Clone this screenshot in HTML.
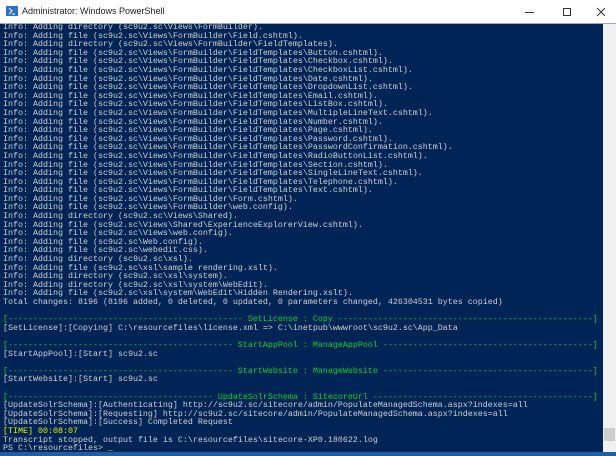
<!DOCTYPE html><html><head><style>
body{margin:0;width:616px;height:456px;overflow:hidden;background:#012456;font-family:"Liberation Sans",sans-serif;position:relative}
#t{position:absolute;left:0;top:0;width:616px;height:23px;background:#fff;border-bottom:1px solid #9ab}
#t span{position:absolute;left:22px;top:6px;font-size:9px;color:#222}
#c{position:absolute;left:3px;top:23px;font-family:"Liberation Mono",monospace;font-size:8.33px;line-height:8.6px;color:#d0d0d0;white-space:pre;margin:0}
.g{color:#13d22b}.y{color:#f0f000}
#sb{position:absolute;left:603px;top:24px;width:13px;height:428px;background:#f0f0f0}
#th{position:absolute;left:604px;top:428px;width:11px;height:13px;background:#cdcdcd}
</style></head><body>
<div id="t"><svg style="position:absolute;left:6px;top:6px" width="12" height="10"><rect width="12" height="10" fill="#2a6fc9"/><path d="M3 2l3 3-3 3M6 8h3" stroke="#fff" fill="none"/></svg><span>Administrator: Windows PowerShell</span>
<svg style="position:absolute;left:525px;top:7px" width="80" height="10"><path d="M0 5.5h9" stroke="#333"/><rect x="38.5" y="1.5" width="7" height="7" fill="none" stroke="#333"/><path d="M72 1l8 8M80 1l-8 8" stroke="#333"/></svg></div>
<pre id="c">Info: Adding directory (sc9u2.sc\Views\FormBuilder).
Info: Adding file (sc9u2.sc\Views\FormBuilder\Field.cshtml).
Info: Adding directory (sc9u2.sc\Views\FormBuilder\FieldTemplates).
Info: Adding file (sc9u2.sc\Views\FormBuilder\FieldTemplates\Button.cshtml).
Info: Adding file (sc9u2.sc\Views\FormBuilder\FieldTemplates\Checkbox.cshtml).
Info: Adding file (sc9u2.sc\Views\FormBuilder\FieldTemplates\CheckboxList.cshtml).
Info: Adding file (sc9u2.sc\Views\FormBuilder\FieldTemplates\Date.cshtml).
Info: Adding file (sc9u2.sc\Views\FormBuilder\FieldTemplates\DropdownList.cshtml).
Info: Adding file (sc9u2.sc\Views\FormBuilder\FieldTemplates\Email.cshtml).
Info: Adding file (sc9u2.sc\Views\FormBuilder\FieldTemplates\ListBox.cshtml).
Info: Adding file (sc9u2.sc\Views\FormBuilder\FieldTemplates\MultipleLineText.cshtml).
Info: Adding file (sc9u2.sc\Views\FormBuilder\FieldTemplates\Number.cshtml).
Info: Adding file (sc9u2.sc\Views\FormBuilder\FieldTemplates\Page.cshtml).
Info: Adding file (sc9u2.sc\Views\FormBuilder\FieldTemplates\Password.cshtml).
Info: Adding file (sc9u2.sc\Views\FormBuilder\FieldTemplates\PasswordConfirmation.cshtml).
Info: Adding file (sc9u2.sc\Views\FormBuilder\FieldTemplates\RadioButtonList.cshtml).
Info: Adding file (sc9u2.sc\Views\FormBuilder\FieldTemplates\Section.cshtml).
Info: Adding file (sc9u2.sc\Views\FormBuilder\FieldTemplates\SingleLineText.cshtml).
Info: Adding file (sc9u2.sc\Views\FormBuilder\FieldTemplates\Telephone.cshtml).
Info: Adding file (sc9u2.sc\Views\FormBuilder\FieldTemplates\Text.cshtml).
Info: Adding file (sc9u2.sc\Views\FormBuilder\Form.cshtml).
Info: Adding file (sc9u2.sc\Views\FormBuilder\web.config).
Info: Adding directory (sc9u2.sc\Views\Shared).
Info: Adding file (sc9u2.sc\Views\Shared\ExperienceExplorerView.cshtml).
Info: Adding file (sc9u2.sc\Views\web.config).
Info: Adding file (sc9u2.sc\Web.config).
Info: Adding file (sc9u2.sc\webedit.css).
Info: Adding directory (sc9u2.sc\xsl).
Info: Adding file (sc9u2.sc\xsl\sample rendering.xslt).
Info: Adding directory (sc9u2.sc\xsl\system).
Info: Adding directory (sc9u2.sc\xsl\system\WebEdit).
Info: Adding file (sc9u2.sc\xsl\system\WebEdit\Hidden Rendering.xslt).
Total changes: 8196 (8196 added, 0 deleted, 0 updated, 0 parameters changed, 426304531 bytes copied)

<span class="g">[----------------------------------------------- SetLicense : Copy ---------------------------------------------------]</span>
[SetLicense]:[Copying] C:\resourcefiles\license.xml =&gt; C:\inetpub\wwwroot\sc9u2.sc\App_Data

<span class="g">[--------------------------------------------- StartAppPool : ManageAppPool ------------------------------------------]</span>
[StartAppPool]:[Start] sc9u2.sc

<span class="g">[--------------------------------------------- StartWebsite : ManageWebsite ------------------------------------------]</span>
[StartWebsite]:[Start] sc9u2.sc

<span class="g">[----------------------------------------- UpdateSolrSchema : SitecoreUrl --------------------------------------------]</span>
[UpdateSolrSchema]:[Authenticating] http://sc9u2.sc/sitecore/admin/PopulateManagedSchema.aspx?indexes=all
[UpdateSolrSchema]:[Requesting] http://sc9u2.sc/sitecore/admin/PopulateManagedSchema.aspx?indexes=all
[UpdateSolrSchema]:[Success] Completed Request
<span class="y">[TIME] 00:08:07</span>
Transcript stopped, output file is C:\resourcefiles\sitecore-XP0.180622.log
PS C:\resourcefiles&gt; <span class="y">_</span></pre>
<div id="sb"></div><div id="th"></div>
<div style="position:absolute;left:0;top:452px;width:616px;height:4px;background:#1a5fa8"></div>
</body></html>
